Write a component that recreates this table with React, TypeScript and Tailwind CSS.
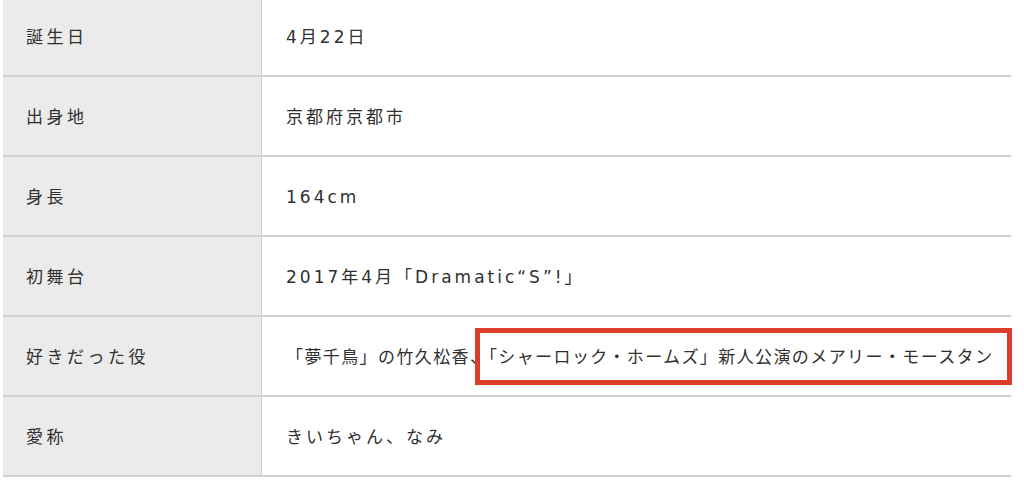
import React from "react";

const rows: [string, string, string][] = [
  ["誕生日", "4月22日", "tracking-[3px]"],
  ["出身地", "京都府京都市", "tracking-[3px]"],
  ["身長", "164cm", "tracking-[3px]"],
  ["初舞台", "2017年4月「Dramatic“S”!」", "tracking-[3px]"],
  ["好きだった役", "「夢千鳥」の竹久松香、「シャーロック・ホームズ」新人公演のメアリー・モースタン", "tracking-[1.4px]"],
  ["愛称", "きいちゃん、なみ", "tracking-[3px]"],
];

export default function App() {
  return (
    <div
      className="w-[1024px] h-[484px] overflow-hidden bg-white"
      style={{ fontFamily: '"DejaVu Sans", "Noto Sans CJK JP", sans-serif' }}
    >
      <div className="relative ml-[3px] w-[1008px] -mt-[3px]">
        {rows.map(([k, v, t], i) => (
          <div key={i} className="flex h-[80px] border-b-2 border-[#d0d0d0]">
            <div className="w-[259px] shrink-0 bg-[#ebebeb] border-r border-[#cfcfcf] flex items-center pl-[23px] pt-[3px] text-[17px] tracking-[3.5px] text-[#2f2f2f]">
              {k}
            </div>
            <div className={`flex-1 flex items-center pl-[24px] pt-[3px] text-[17px] text-[#2f2f2f] whitespace-nowrap ${t}`}>
              {v}
            </div>
          </div>
        ))}
        <div className="absolute left-[472px] top-[331px] w-[537px] h-[57px] border-[5px] border-[#da3e2b] pointer-events-none" />
      </div>
    </div>
  );
}
